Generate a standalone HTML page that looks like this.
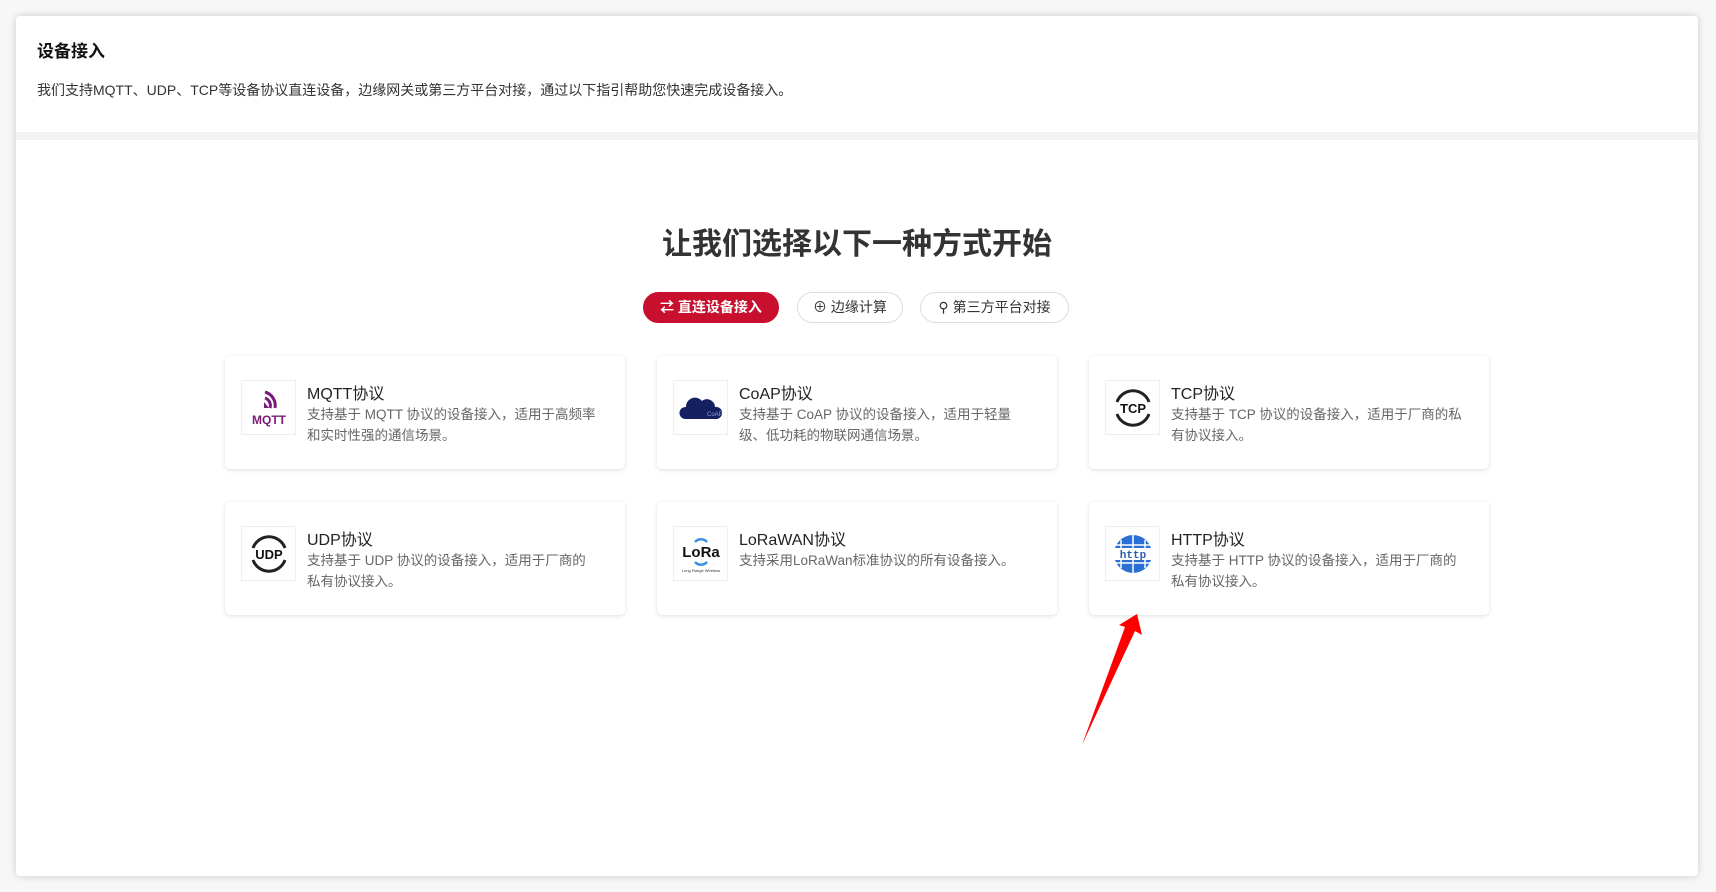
<!DOCTYPE html>
<html><head><meta charset="utf-8"><style>
*{margin:0;padding:0;box-sizing:border-box}
body{width:1716px;height:892px;background:#f7f7f7;font-family:"Liberation Sans","Noto Sans CJK SC",sans-serif;position:relative;overflow:hidden;color:#222}
.frame{position:absolute;left:16px;top:16px;width:1682px;height:860px;background:#fff;box-shadow:0 0 8px rgba(0,0,0,.18);border-radius:4px;overflow:hidden}
.sep{position:absolute;left:0;top:116px;width:100%;height:8px;background:#f2f2f2}
.t1{position:absolute;left:21px;top:21px;font-size:17px;font-weight:bold;color:#111}
.t2{position:absolute;left:21px;top:64px;font-size:14px;color:#333}
h1{position:absolute;left:0;width:100%;top:203px;text-align:center;font-size:30px;font-weight:bold;color:#333}
.btn{position:absolute;top:276px;height:31px;border-radius:16px;border:1px solid #ddd;font-size:14px;line-height:29px;text-align:center;color:#333;background:#fff}
.btn.on{background:#c8102e;border-color:#c8102e;color:#fff;font-weight:bold}
.card{position:absolute;width:400px;height:113px;background:#fff;border-radius:5px;box-shadow:0 1px 5px rgba(0,0,0,.13)}
.ic{position:absolute;left:16px;top:24px;width:55px;height:55px;border:1px solid #eee;display:flex;align-items:center;justify-content:center}
.ct{position:absolute;left:82px;top:24px;font-size:16px;color:#222}
.cd{position:absolute;left:82px;top:48px;width:289.5px;font-size:13.5px;line-height:21px;color:#666}
</style></head><body>
<div class="frame">
<div class="t1">设备接入</div>
<div class="t2">我们支持MQTT、UDP、TCP等设备协议直连设备，边缘网关或第三方平台对接，通过以下指引帮助您快速完成设备接入。</div>
<div class="sep"></div>
<h1>让我们选择以下一种方式开始</h1>
<div class="btn on" style="left:627px;width:136px">⇄ 直连设备接入</div>
<div class="btn" style="left:781px;width:106px">⊕ 边缘计算</div>
<div class="btn" style="left:904px;width:149px">⚲ 第三方平台对接</div>

<div class="card" style="left:209px;top:340px"><div class="ic"><svg width="44" height="40" viewBox="0 0 44 40"><path d="M18 4 a14 14 0 0 1 10 16" stroke="#7b1a7b" stroke-width="3" fill="none"/><path d="M18 10 a8 8 0 0 1 5 10" stroke="#7b1a7b" stroke-width="3" fill="none"/><path d="M17 14v6h5z" fill="#7b1a7b"/><text x="22" y="36" text-anchor="middle" font-size="12" font-weight="bold" fill="#7b1a7b" font-family="Liberation Sans">MQTT</text></svg></div><div class="ct">MQTT协议</div><div class="cd">支持基于 MQTT 协议的设备接入，适用于高频率和实时性强的通信场景。</div></div>
<div class="card" style="left:641px;top:340px"><div class="ic"><svg width="44" height="30" viewBox="0 0 44 30"><path d="M6 26a6 6 0 0 1 1-12a9 9 0 0 1 16-6a8 8 0 0 1 13 6a6 6 0 0 1 2 12z" fill="#142060"/><text x="28" y="23" font-size="6" fill="#8fa0e0" font-family="Liberation Sans">CoAP</text></svg></div><div class="ct">CoAP协议</div><div class="cd">支持基于 CoAP 协议的设备接入，适用于轻量级、低功耗的物联网通信场景。</div></div>
<div class="card" style="left:1073px;top:340px"><div class="ic"><svg width="44" height="44" viewBox="0 0 44 44"><path d="M6 16a17 17 0 0 1 32 0M6 28a17 17 0 0 0 32 0" stroke="#222" stroke-width="3" fill="none"/><text x="22" y="27" text-anchor="middle" font-size="13" font-weight="bold" fill="#111" font-family="Liberation Sans">TCP</text></svg></div><div class="ct">TCP协议</div><div class="cd" style="width:302px">支持基于 TCP 协议的设备接入，适用于厂商的私有协议接入。</div></div>

<div class="card" style="left:209px;top:486px"><div class="ic"><svg width="44" height="44" viewBox="0 0 44 44"><path d="M6 16a17 17 0 0 1 32 0M6 28a17 17 0 0 0 32 0" stroke="#222" stroke-width="3" fill="none"/><text x="22" y="27" text-anchor="middle" font-size="13" font-weight="bold" fill="#111" font-family="Liberation Sans">UDP</text></svg></div><div class="ct">UDP协议</div><div class="cd">支持基于 UDP 协议的设备接入，适用于厂商的私有协议接入。</div></div>
<div class="card" style="left:641px;top:486px"><div class="ic"><svg width="46" height="44" viewBox="0 0 46 44"><path d="M17 10a8 8 0 0 1 12 0M17 30a8 8 0 0 0 12 0" stroke="#3a8ee0" stroke-width="2.5" fill="none"/><text x="23" y="25" text-anchor="middle" font-size="15" font-weight="bold" fill="#111" font-family="Liberation Sans">LoRa</text><text x="23" y="40" text-anchor="middle" font-size="4" fill="#333">Long Range Wireless</text></svg></div><div class="ct">LoRaWAN协议</div><div class="cd">支持采用LoRaWan标准协议的所有设备接入。</div></div>
<div class="card" style="left:1073px;top:486px"><div class="ic"><svg width="44" height="44" viewBox="0 0 44 44"><circle cx="22" cy="22" r="19" fill="#2a6fd6"/><path d="M3 22h38M22 3v38M10 8v28M34 8v28M5 13h34M5 31h34" stroke="#fff" stroke-width="1.5"/><rect x="2" y="16" width="40" height="12" fill="#fff"/><text x="22" y="26" text-anchor="middle" font-size="11" font-weight="bold" fill="#2a5fb0" font-family="Liberation Mono">http</text></svg></div><div class="ct">HTTP协议</div><div class="cd">支持基于 HTTP 协议的设备接入，适用于厂商的私有协议接入。</div></div>
</div>
<svg style="position:absolute;left:0;top:0" width="1716" height="892"><polygon points="1137,614 1142,635 1135,631 1082,745 1125,627 1119,625" fill="#f00"/></svg>
</body></html>
